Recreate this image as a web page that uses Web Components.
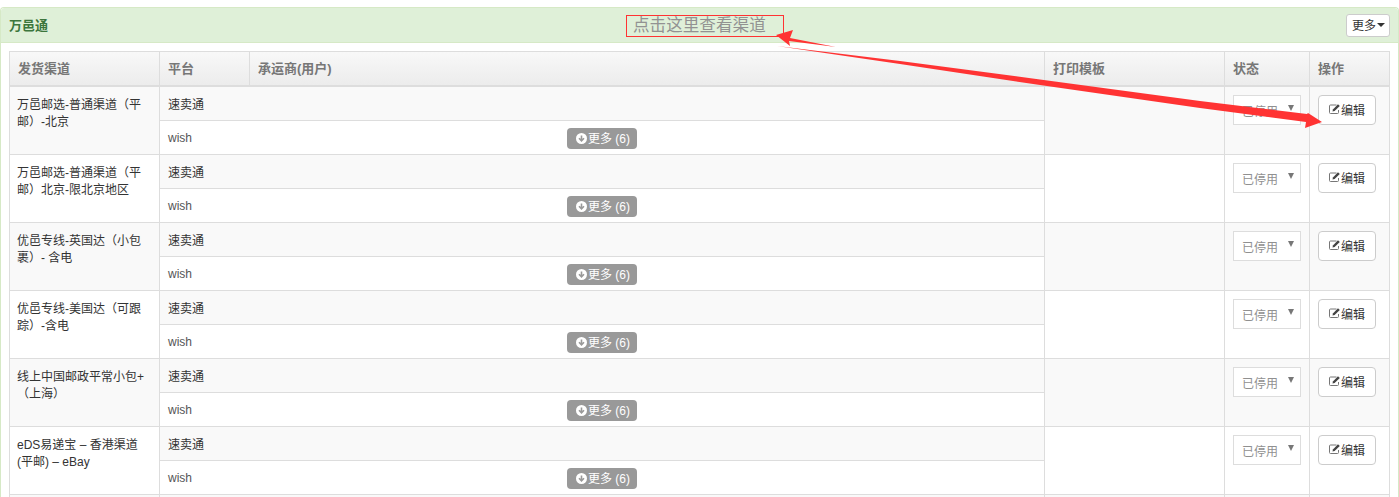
<!DOCTYPE html>
<html lang="zh">
<head>
<meta charset="utf-8">
<title>万邑通</title>
<style>
html, body { margin: 0; height: 497px; overflow: hidden; background: #fff; }
body { font: 12px/17px "Liberation Sans", "Noto Sans CJK SC", sans-serif; color: #333; padding-top: 7px; box-sizing: border-box; position: relative; }
</style>
</head>
<body>
<channel-panel heading="万邑通">
  <channel-head></channel-head>
  <channel-row name="万邑邮选-普通渠道（平邮）-北京"></channel-row>
  <channel-row name="万邑邮选-普通渠道（平邮）北京-限北京地区"></channel-row>
  <channel-row name="优邑专线-英国达（小包裹）- 含电"></channel-row>
  <channel-row name="优邑专线-美国达（可跟踪）-含电"></channel-row>
  <channel-row name="线上中国邮政平常小包+（上海）"></channel-row>
  <channel-row name="eDS易递宝 – 香港渠道 (平邮) – eBay"></channel-row>
  <channel-row blank></channel-row>
</channel-panel>
<note-overlay text="点击这里查看渠道"></note-overlay>

<script>
class ChannelPanel extends HTMLElement {
    constructor() {
        super();
        this.attachShadow({ mode: 'open' });
    }

    static get styles() {
        return /*css*/`
        :host{
            display: block;
            box-sizing: border-box;
            height: 490px;
            overflow: hidden;
            border: 1px solid #d6e9c6;
            border-bottom: 0;
            border-radius: 4px 4px 0 0;
        }
        #head{
            display: flex;
            align-items: center;
            justify-content: space-between;
            height: 34px;
            padding: 0 8px;
            background: #dff0d8;
            border-bottom: 1px solid #d6e9c6;
            border-radius: 3px 3px 0 0;
        }
        h3{
            margin: 0;
            font-size: 13px;
            font-weight: bold;
            color: #3c763d;
        }
        button{
            display: flex;
            align-items: center;
            gap: 1px;
            box-sizing: border-box;
            width: 44px;
            height: 23px;
            padding: 0 0 0 5px;
            font: inherit;
            color: #333;
            background: #fff;
            border: 1px solid #ccc;
            border-radius: 3px;
        }
        button span{
            padding-top: 3px;
        }
        i{
            border: 4px solid transparent;
            border-top-color: #333;
            border-bottom: 0;
        }
        #body{
            padding: 8px;
        }
        #table{
            border-top: 1px solid #ddd;
        }
        `
    }

    connectedCallback() {
        this.shadowRoot.innerHTML = /*html*/`
        <style>${ChannelPanel.styles}</style>
        <div id="head">
            <h3>${this.getAttribute('heading')}</h3>
            <button><span>更多</span><i></i></button>
        </div>
        <div id="body"><div id="table"><slot></slot></div></div>
        `
    }
}

class ChannelHead extends HTMLElement {
    constructor() {
        super();
        this.attachShadow({ mode: 'open' });
    }

    static get styles() {
        return /*css*/`
        :host{
            display: grid;
            grid-template-columns: 150px 90px 795px 180px 85px 81px;
            height: 35px;
            box-sizing: border-box;
            border-bottom: 2px solid #ddd;
            background: linear-gradient(#f8f8f8, #ececec);
        }
        div{
            display: flex;
            align-items: center;
            padding-left: 8px;
            border-left: 1px solid #ddd;
            font-size: 13px;
            font-weight: bold;
            color: #777;
        }
        div:first-child{
            padding-left: 6px;
        }
        div:last-child{
            border-right: 1px solid #ddd;
        }
        `
    }

    connectedCallback() {
        this.shadowRoot.innerHTML = /*html*/`
        <style>${ChannelHead.styles}</style>
        <div>发货渠道</div><div>平台</div><div>承运商(用户)</div>
        <div>打印模板</div><div>状态</div><div>操作</div>
        `
    }
}

class MoreBadge extends HTMLElement {
    constructor() {
        super();
        this.attachShadow({ mode: 'open' });
    }

    connectedCallback() {
        this.shadowRoot.innerHTML = /*html*/`
        <style>
        :host{
            display: inline-flex;
            align-items: center;
            gap: 1px;
            box-sizing: border-box;
            width: 70px;
            height: 21px;
            padding-left: 9px;
            background: #999;
            border-radius: 4px;
            color: #fff;
            white-space: nowrap;
        }
        svg{ flex: none; }
        span{ padding-top: 2px; }
        </style>
        <svg width="11" height="11" viewBox="0 0 11 11">
            <circle cx="5.5" cy="5.5" r="5.5" fill="#fff"/>
            <path d="M5.5 2.5v5M3 5.3l2.5 2.5L8 5.3" fill="none" stroke="#999" stroke-width="1.6"/>
        </svg><span>更多 (6)</span>
        `
    }
}

class StatusSelect extends HTMLElement {
    constructor() {
        super();
        this.attachShadow({ mode: 'open' });
    }

    connectedCallback() {
        this.shadowRoot.innerHTML = /*html*/`
        <style>
        :host{
            display: flex;
            align-items: center;
            justify-content: space-between;
            box-sizing: border-box;
            width: 68px;
            height: 30px;
            padding: 0 6px 0 8px;
            background: #fff;
            border: 1px solid #ddd;
            color: #909090;
        }
        span{ padding-top: 4px; }
        i{
            margin-top: -4px;
            border: 3.5px solid transparent;
            border-top: 6px solid #777;
            border-bottom: 0;
        }
        </style>
        <span>已停用</span><i></i>
        `
    }
}

class EditButton extends HTMLElement {
    constructor() {
        super();
        this.attachShadow({ mode: 'open' });
    }

    connectedCallback() {
        this.shadowRoot.innerHTML = /*html*/`
        <style>
        :host{
            display: flex;
            align-items: center;
            justify-content: center;
            box-sizing: border-box;
            width: 58px;
            height: 30px;
            background: #fff;
            border: 1px solid #ccc;
            border-radius: 4px;
            color: #333;
        }
        svg{ margin-top: -3px; }
        span{ padding-top: 3px; }
        </style>
        <svg width="12" height="12" viewBox="0 0 12 12">
            <path d="M9.5 7v2.5a1 1 0 0 1-1 1H1.5a1 1 0 0 1-1-1V3a1 1 0 0 1 1-1h6" fill="none" stroke="#777" stroke-width="1"/>
            <path d="M3.5 8.5l.4-2L9 1.2l1.8 1.7-5.2 5.2z" fill="#444"/>
        </svg><span>编辑</span>
        `
    }
}

class ChannelRow extends HTMLElement {
    constructor() {
        super();
        this.attachShadow({ mode: 'open' });
    }

    static get styles() {
        return /*css*/`
        :host{
            display: grid;
            grid-template-columns: 150px 885px 180px 85px 81px;
            height: 68px;
            box-sizing: border-box;
            border-bottom: 1px solid #ddd;
        }
        :host(:nth-of-type(odd)) .cell{
            background: #f9f9f9;
        }
        .cell{
            padding: 8px 8px 0;
            border-left: 1px solid #ddd;
        }
        .cell:last-child{
            border-right: 1px solid #ddd;
        }
        .name{
            padding: 10px 8px 0 7px;
        }
        .platforms{
            display: grid;
            grid-template-rows: 34px 33px;
            border-left: 1px solid #ddd;
        }
        .platform{
            display: grid;
            grid-template-columns: 1fr auto 1fr;
            align-items: center;
            background: #fff;
            color: #555;
        }
        .platform:first-child{
            border-bottom: 1px solid #ddd;
            background: #f9f9f9;
            color: #333;
        }
        .label{
            padding: 2px 0 0 8px;
        }
        .platform:first-child .label{
            padding-top: 4px;
        }
        more-badge{
            margin-top: 1px;
        }
        `
    }

    connectedCallback() {
        const blank = this.hasAttribute('blank');
        this.shadowRoot.innerHTML = /*html*/`
        <style>${ChannelRow.styles}</style>
        <div class="cell name">${this.getAttribute('name') || ''}</div>
        <div class="platforms">
            <div class="platform">${blank ? '' : '<span class="label">速卖通</span>'}</div>
            <div class="platform">${blank ? '' : '<span class="label">wish</span><more-badge></more-badge>'}</div>
        </div>
        <div class="cell"></div>
        <div class="cell">${blank ? '' : '<status-select></status-select>'}</div>
        <div class="cell">${blank ? '' : '<edit-button></edit-button>'}</div>
        `
    }
}

class NoteOverlay extends HTMLElement {
    constructor() {
        super();
        this.attachShadow({ mode: 'open' });
    }

    static get styles() {
        return /*css*/`
        :host{
            position: absolute;
            left: 0;
            top: 0;
            width: 1399px;
            height: 497px;
            pointer-events: none;
        }
        #box{
            position: absolute;
            left: 626px;
            top: 15px;
            width: 158px;
            height: 22px;
            box-sizing: border-box;
            padding-left: 6px;
            border: 1px solid #f33;
            font-size: 16.6px;
            line-height: 19px;
            color: #929292;
            white-space: nowrap;
        }
        svg{
            position: absolute;
            left: 0;
            top: 0;
        }
        `
    }

    connectedCallback() {
        this.shadowRoot.innerHTML = /*html*/`
        <style>${NoteOverlay.styles}</style>
        <div id="box">${this.getAttribute('text')}</div>
        <svg width="1399" height="497" viewBox="0 0 1399 497">
            <path fill="#f33" d="M776 35 793 30 790 38 836 47 789 41 790 46z"/>
            <path fill="#f33" d="M777 46 900 61 1040 79.5 1200 101 1307 114 1308 113 1322 122 1305 128 1306 122 1200 108 1040 85 900 64z"/>
        </svg>
        `
    }
}

customElements.define('channel-panel', ChannelPanel);
customElements.define('channel-head', ChannelHead);
customElements.define('more-badge', MoreBadge);
customElements.define('status-select', StatusSelect);
customElements.define('edit-button', EditButton);
customElements.define('channel-row', ChannelRow);
customElements.define('note-overlay', NoteOverlay);
</script>
</body>
</html>
